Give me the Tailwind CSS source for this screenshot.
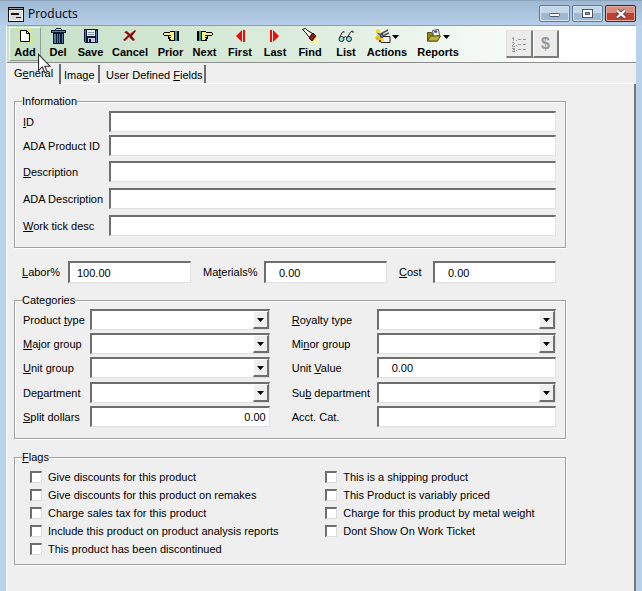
<!DOCTYPE html>
<html lang="en">
<head>
    <meta charset="UTF-8">
    <meta name="viewport" content="width=device-width, initial-scale=1.0">
    <title>Products</title>
    <script src="https://cdn.jsdelivr.net/npm/@tailwindcss/browser@4"></script>
</head>
<body class="min-h-screen flex flex-col bg-[#b9d1ea] font-['Liberation_Sans',Arial,sans-serif] text-[11px] leading-[14px] text-black">
    <!-- Title bar -->
    <header class="h-[25px] shrink-0 flex items-start justify-between pl-2 pr-[6px] bg-linear-to-b from-[#9fb9d4] to-[#b7cfe9] border-t border-[#8fa5bd]">
        <div class="flex items-center gap-1 pt-1">
            <svg class="w-4 h-[15px]" viewBox="0 0 16 15" shape-rendering="crispEdges">
                <path fill="#111" d="M0 0h16v15H0z"/>
                <path fill="#999" d="M1 1h14v1H1z"/>
                <path fill="#fff" d="M1 3h14v11H1z"/>
                <path fill="#dcdcdc" d="M2 4h12v9H2z"/>
                <path fill="#111" d="M3 6h8v2H3zM8 10h5v1H8z"/>
            </svg>
            <h1 class="font-['Open_Sans','Noto_Sans',sans-serif] text-[12px] leading-[18px]">Products</h1>
        </div>
        <div class="flex gap-[2px] pt-1">
            <button aria-label="Minimize" class="w-[31px] h-[17px] flex items-center justify-center rounded-[2px] border border-[#5f7896] bg-linear-to-b from-[#c3d6ea] from-50% to-[#9fb9d5] to-50% shadow-[inset_0_0_0_1px_#d5e3f1]">
                <svg class="w-3 h-3" viewBox="0 0 12 12"><rect x="0.5" y="5.5" width="10" height="3" rx="1" fill="#fff" stroke="#4d5866"/></svg>
            </button>
            <button aria-label="Maximize" class="w-[31px] h-[17px] flex items-center justify-center rounded-[2px] border border-[#5f7896] bg-linear-to-b from-[#c3d6ea] from-50% to-[#9fb9d5] to-50% shadow-[inset_0_0_0_1px_#d5e3f1]">
                <svg class="w-3 h-3" viewBox="0 0 12 12"><rect x="0.5" y="1.5" width="10" height="8" fill="#fff" stroke="#4d5866"/><rect x="3.5" y="4.5" width="4" height="2" fill="#8aa" stroke="#4d5866"/></svg>
            </button>
            <button aria-label="Close" class="w-[31px] h-[17px] flex items-center justify-center rounded-[2px] border border-[#5b1f1c] bg-linear-to-b from-[#d98d7e] from-50% to-[#bd4030] to-50% shadow-[inset_0_0_0_1px_#e3aaa0]">
                <svg class="w-3 h-3" viewBox="0 0 12 12"><path d="M2 2.500l8 7M10 2.500l-8 7" stroke="#4d4550" stroke-width="4"/><path d="M2 2.500l8 7M10 2.500l-8 7" stroke="#fff" stroke-width="2.300"/></svg>
            </button>
        </div>
    </header>

    <div class="relative flex-grow flex flex-col mx-[6px] bg-[#efefef] border-l border-[#f8f8f8]">
        <!-- Toolbar -->
        <div class="h-[38px] shrink-0 flex items-center border-t border-b border-t-[#9a9a9a] border-b-[#8e8e8e] pl-[2px] bg-linear-to-r from-[#c5e0c6] via-[#dcecdc] via-45% to-white to-90% font-bold leading-4">
            <button class="w-8 h-[34px] flex flex-col items-center justify-center border border-r-[#8fa08f] border-b-[#8fa08f] border-t-white border-l-white">
                <svg class="w-4 h-4" viewBox="0 0 16 16">
                    <path d="M1 1l4 4M15 1l-4 4M0 8h4M16 8h-4M1 15l4-4M15 15l-4-4" stroke="#f5f02a" stroke-width="1.500"/>
                    <path d="M3.500 2.500h6l3 3v8h-9z" fill="#fff" stroke="#000"/><path d="M9.500 2.500v3h3" fill="none" stroke="#000"/>
                </svg>
                <span>Add</span>
            </button>
            <button class="w-[34px] flex flex-col items-center">
                <svg class="w-4 h-4" viewBox="0 0 16 16" shape-rendering="crispEdges">
                    <path fill="#0d1b33" d="M6 0h5v1H6zM5 1h1v1H5zM11 1h1v1h-1zM1 2h15v3H1zM3 5h11v11H3z"/>
                    <path fill="#5b7fae" d="M2 3h13v1H2z"/>
                    <path fill="#5379ab" d="M4 6h2v9H4zM7 6h1v9H7zM9 6h1v9H9zM12 6h1v9h-1z"/>
                </svg>
                <span>Del</span>
            </button>
            <button class="w-[31px] flex flex-col items-center">
                <svg class="w-4 h-4" viewBox="0 0 16 16" shape-rendering="crispEdges">
                    <path fill="#0b1433" d="M1 1h13l1 1v13H2l-1-1z"/>
                    <path fill="#5870a8" d="M2 2h1v12H2zM13 3h1v11h-1z"/>
                    <path fill="#e8edf4" d="M4 2h8v6H4z"/>
                    <path fill="#8794ad" d="M5 4h6v1H5zM5 6h6v1H5z"/>
                    <path fill="#c8ccd8" d="M5 10h7v4H5z"/><path fill="#0b1433" d="M6 11h2v3H6z"/>
                </svg>
                <span>Save</span>
            </button>
            <button class="w-12 flex flex-col items-center">
                <svg class="w-4 h-4" viewBox="0 0 16 16">
                    <path fill="#8b0d12" d="M2 4l3-1 3 3 5-4 1 1-4 5 3 4-2 1-4-4-4 4-2-1 5-5z"/>
                </svg>
                <span>Cancel</span>
            </button>
            <button class="w-[33px] flex flex-col items-center">
                <svg class="w-4 h-4" viewBox="0 0 16 16" shape-rendering="crispEdges">
                    <path fill="#000" d="M1 4h6v-1h6v10H6v-2H5V8H1V7H0V5h1z"/>
                    <path fill="#fff27a" d="M1 5h7v2H1zM7 4h4v8H7zM6 8h2v2H6z"/>
                    <path fill="#000" d="M5 7h3v1H5zM6 9h2v1H6zM7 11h1v1H7z"/>
                    <path fill="#18a9a0" d="M12 3h2v10h-2z"/><path fill="#000" d="M14 3h2v10h-2z"/>
                </svg>
                <span>Prior</span>
            </button>
            <button class="w-[35px] flex flex-col items-center">
                <svg class="w-4 h-4" viewBox="0 0 16 16" shape-rendering="crispEdges">
                    <g transform="matrix(-1 0 0 1 16 0)">
                        <path fill="#000" d="M1 4h6v-1h6v10H6v-2H5V8H1V7H0V5h1z"/>
                        <path fill="#fff27a" d="M1 5h7v2H1zM7 4h4v8H7zM6 8h2v2H6z"/>
                        <path fill="#000" d="M5 7h3v1H5zM6 9h2v1H6zM7 11h1v1H7z"/>
                        <path fill="#18a9a0" d="M12 3h2v10h-2z"/><path fill="#000" d="M14 3h2v10h-2z"/>
                    </g>
                </svg>
                <span>Next</span>
            </button>
            <button class="w-9 flex flex-col items-center">
                <svg class="w-4 h-4" viewBox="0 0 16 16"><path fill="#f00b0b" d="M4 8l6-6v12zM11 2h2v12h-2z"/></svg>
                <span>First</span>
            </button>
            <button class="w-[34px] flex flex-col items-center">
                <svg class="w-4 h-4" viewBox="0 0 16 16"><path fill="#f00b0b" d="M12 8L6 2v12zM3 2h2v12H3z"/></svg>
                <span>Last</span>
            </button>
            <button class="w-9 flex flex-col items-center">
                <svg class="w-4 h-4" viewBox="0 0 16 16">
                    <path fill="#fdf5a0" d="M15 8l1 8H7l3-4z"/>
                    <path d="M.5 1.500l3-1 2 2 5 3-3 4-4-5z" fill="#fff" stroke="#000"/>
                    <path d="M11 5l3 3-4 5-3-3z" fill="#a31515" stroke="#300"/>
                </svg>
                <span>Find</span>
            </button>
            <button class="w-9 flex flex-col items-center">
                <svg class="w-4 h-4" viewBox="0 0 16 16">
                    <path d="M1.500 10L4 4.500 6 3.500v1M9.500 9L13 3.500l2-.5v2M6 9.500q1.500-2 3 0" fill="none" stroke="#222"/>
                    <circle cx="3.500" cy="11" r="2.500" fill="#8fe3e3" stroke="#222"/><circle cx="11" cy="11" r="2.500" fill="#8fe3e3" stroke="#222"/>
                </svg>
                <span>List</span>
            </button>
            <button class="w-[46px] flex flex-col items-center">
                <svg class="w-6 h-4" viewBox="0 0 24 16">
                    <path d="M6 8.500h9v6H6z" fill="#f2f2f2" stroke="#222"/>
                    <path d="M4 7l9-5M5 9l9-4M2 4l6 6" stroke="#555" stroke-width="1.500"/>
                    <circle cx="3" cy="3" r="2" fill="#f3dc1d"/><circle cx="3" cy="10" r="2.500" fill="#e0bd16"/><circle cx="7" cy="12" r="2" fill="#f3dc1d"/>
                    <path fill="#b32020" d="M4 12h2v2H4z"/><path fill="#3641a0" d="M6 5h2v2H6z"/>
                    <path fill="#000" d="M17 7h7l-3.500 4z"/>
                </svg>
                <span>Actions</span>
            </button>
            <button class="w-14 flex flex-col items-center">
                <svg class="w-6 h-4" viewBox="0 0 24 16">
                    <path d="M1.500 4.500h4l1 1.500h5v7h-10z" fill="#8f8b1c" stroke="#54520f"/>
                    <path d="M6.500 2.500l6-1 1 6-6 1z" fill="#fff" stroke="#555"/><path fill="#3646b5" d="M8 3l3-.5.5 2-3 .5z"/>
                    <path d="M1.500 13l3-5h10l-3 5z" fill="#b9b53c" stroke="#54520f"/>
                    <path fill="#000" d="M17 7h7l-3.500 4z"/>
                </svg>
                <span>Reports</span>
            </button>
            <button disabled aria-label="Numbered list" class="ml-10 w-[27px] h-7 flex items-center justify-center bg-[#ececec] border border-l-[#e0e0e0] border-t-[#e0e0e0] border-r-2 border-b-2 border-r-[#7b7b7b] border-b-[#7b7b7b]">
                <svg class="w-4 h-4" viewBox="0 0 16 16" shape-rendering="crispEdges">
                    <path fill="#9b9b9b" d="M2 1h1v4H2zM1 2h1v1H1zM1 6h2v1h1v1H3v1H2v1h2v1H1V9h1V8h1V7H1zM1 12h3v4H1v-1h2v-1H2v-1h1H1zM5 4h1v1H5zM5 9h1v1H5zM5 14h1v1H5zM7 3h3v1H7zM12 3h3v1h-3zM7 8h3v1H7zM12 8h3v1h-3zM7 13h3v1H7zM12 13h3v1h-3z"/>
                </svg>
            </button>
            <button disabled class="w-[26px] h-7 flex items-center justify-center bg-[#ececec] border border-l-white border-t-[#e0e0e0] border-r-2 border-b-2 border-r-[#7b7b7b] border-b-[#7b7b7b] text-[16px] text-[#9a9a9a]">$</button>
        </div>

        <!-- Tabs -->
        <nav class="h-[21px] shrink-0 flex items-end">
            <a href="#general" class="h-5 w-[54px] pl-[7px] pt-[2px] border-r-2 border-[#6e6e6e]">G<u>e</u>neral</a>
            <div class="flex-grow flex items-end border-b border-white">
                <a href="#image" class="h-[18px] w-[39px] pl-[3px] pt-[3px] border-r-2 border-[#6e6e6e]">Ima<u>g</u>e</a>
                <a href="#fields" class="h-[18px] w-[106px] pl-[6px] pt-[3px] border-r-2 border-[#6e6e6e]">User Defined <u>F</u>ields</a>
            </div>
        </nav>

        <main id="general" class="flex-grow border-r-2 border-[#777] pl-[7px] pr-[68px] pt-[10px]">
            <fieldset class="border border-[#a0a0a0] shadow-[1px_1px_0_#fff,inset_1px_1px_0_#fff] pl-2 pr-[9px] pt-[3px] pb-[11px]">
                <legend class="-ml-[1px] bg-[#efefef]">Information</legend>
                <div class="flex items-center">
                    <label for="pid" class="w-[86px]"><u>I</u>D</label>
                    <input id="pid" type="text" class="flex-grow h-[21px] px-2 bg-white border border-t-2 border-l-2 border-t-[#6e6e6e] border-l-[#6e6e6e] border-r-[#e0e0e0] border-b-[#e0e0e0] outline-none">
                </div>
                <div class="flex items-center mt-[3px]">
                    <label for="ada" class="w-[86px]">ADA Product ID</label>
                    <input id="ada" type="text" class="flex-grow h-[21px] px-2 bg-white border border-t-2 border-l-2 border-t-[#6e6e6e] border-l-[#6e6e6e] border-r-[#e0e0e0] border-b-[#e0e0e0] outline-none">
                </div>
                <div class="flex items-center mt-[5px]">
                    <label for="desc" class="w-[86px]"><u>D</u>escription</label>
                    <input id="desc" type="text" class="flex-grow h-[21px] px-2 bg-white border border-t-2 border-l-2 border-t-[#6e6e6e] border-l-[#6e6e6e] border-r-[#e0e0e0] border-b-[#e0e0e0] outline-none">
                </div>
                <div class="flex items-center mt-[6px]">
                    <label for="adadesc" class="w-[86px]">ADA Description</label>
                    <input id="adadesc" type="text" class="flex-grow h-[21px] px-2 bg-white border border-t-2 border-l-2 border-t-[#6e6e6e] border-l-[#6e6e6e] border-r-[#e0e0e0] border-b-[#e0e0e0] outline-none">
                </div>
                <div class="flex items-center mt-[6px]">
                    <label for="tick" class="w-[86px]"><u>W</u>ork tick desc</label>
                    <input id="tick" type="text" class="flex-grow h-[21px] px-2 bg-white border border-t-2 border-l-2 border-t-[#6e6e6e] border-l-[#6e6e6e] border-r-[#e0e0e0] border-b-[#e0e0e0] outline-none">
                </div>
            </fieldset>

            <div class="flex items-center mt-[13px] pl-2 pr-[10px]">
                <label for="labor" class="w-[46px]"><u>L</u>abor%</label>
                <input id="labor" type="text" value="100.00" class="grow basis-20 min-w-0 h-[22px] pl-[7px] bg-white border border-t-2 border-l-2 border-t-[#6e6e6e] border-l-[#6e6e6e] border-r-[#e0e0e0] border-b-[#e0e0e0] outline-none">
                <label for="materials" class="w-[61px] ml-3">Ma<u>t</u>erials%</label>
                <input id="materials" type="text" value="0.00" class="grow basis-20 min-w-0 h-[22px] pl-[13px] bg-white border border-t-2 border-l-2 border-t-[#6e6e6e] border-l-[#6e6e6e] border-r-[#e0e0e0] border-b-[#e0e0e0] outline-none">
                <label for="cost" class="w-[34px] ml-3"><u>C</u>ost</label>
                <input id="cost" type="text" value="0.00" class="grow basis-20 min-w-0 h-[22px] pl-[13px] bg-white border border-t-2 border-l-2 border-t-[#6e6e6e] border-l-[#6e6e6e] border-r-[#e0e0e0] border-b-[#e0e0e0] outline-none">
            </div>

            <fieldset class="mt-[10px] border border-[#a0a0a0] shadow-[1px_1px_0_#fff,inset_1px_1px_0_#fff] pl-2 pr-[9px] pt-[2px] pb-[11px]">
                <legend class="-ml-[1px] bg-[#efefef]">Categories</legend>
                <div class="grid grid-cols-[14fr_15fr] gap-x-[22px]">
                    <div class="flex flex-col gap-[3px]">
                        <div class="flex items-center">
                            <label for="ptype" class="w-[67px]">Product <u>t</u>ype</label>
                            <div class="relative flex-grow">
                                <select id="ptype" class="appearance-none block w-full h-[21px] bg-white border border-t-2 border-l-2 border-t-[#6e6e6e] border-l-[#6e6e6e] border-r-[#e0e0e0] border-b-[#e0e0e0] outline-none"><option></option></select>
                                <span class="absolute right-[1px] top-[2px] w-4 h-[18px] flex items-center justify-center pointer-events-none bg-[#efefef] border border-white border-r-2 border-b-2 border-r-[#6e6e6e] border-b-[#6e6e6e]"><svg class="w-[7px] h-1" viewBox="0 0 7 4"><path d="M0 0h7L3.500 4z"/></svg></span>
                            </div>
                        </div>
                        <div class="flex items-center">
                            <label for="major" class="w-[67px]"><u>M</u>ajor group</label>
                            <div class="relative flex-grow">
                                <select id="major" class="appearance-none block w-full h-[21px] bg-white border border-t-2 border-l-2 border-t-[#6e6e6e] border-l-[#6e6e6e] border-r-[#e0e0e0] border-b-[#e0e0e0] outline-none"><option></option></select>
                                <span class="absolute right-[1px] top-[2px] w-4 h-[18px] flex items-center justify-center pointer-events-none bg-[#efefef] border border-white border-r-2 border-b-2 border-r-[#6e6e6e] border-b-[#6e6e6e]"><svg class="w-[7px] h-1" viewBox="0 0 7 4"><path d="M0 0h7L3.500 4z"/></svg></span>
                            </div>
                        </div>
                        <div class="flex items-center">
                            <label for="ugroup" class="w-[67px]"><u>U</u>nit group</label>
                            <div class="relative flex-grow">
                                <select id="ugroup" class="appearance-none block w-full h-[21px] bg-white border border-t-2 border-l-2 border-t-[#6e6e6e] border-l-[#6e6e6e] border-r-[#e0e0e0] border-b-[#e0e0e0] outline-none"><option></option></select>
                                <span class="absolute right-[1px] top-[2px] w-4 h-[18px] flex items-center justify-center pointer-events-none bg-[#efefef] border border-white border-r-2 border-b-2 border-r-[#6e6e6e] border-b-[#6e6e6e]"><svg class="w-[7px] h-1" viewBox="0 0 7 4"><path d="M0 0h7L3.500 4z"/></svg></span>
                            </div>
                        </div>
                        <div class="flex items-center mt-[1px]">
                            <label for="dept" class="w-[67px]">De<u>p</u>artment</label>
                            <div class="relative flex-grow">
                                <select id="dept" class="appearance-none block w-full h-[21px] bg-white border border-t-2 border-l-2 border-t-[#6e6e6e] border-l-[#6e6e6e] border-r-[#e0e0e0] border-b-[#e0e0e0] outline-none"><option></option></select>
                                <span class="absolute right-[1px] top-[2px] w-4 h-[18px] flex items-center justify-center pointer-events-none bg-[#efefef] border border-white border-r-2 border-b-2 border-r-[#6e6e6e] border-b-[#6e6e6e]"><svg class="w-[7px] h-1" viewBox="0 0 7 4"><path d="M0 0h7L3.500 4z"/></svg></span>
                            </div>
                        </div>
                        <div class="flex items-center">
                            <label for="split" class="w-[67px]"><u>S</u>plit dollars</label>
                            <input id="split" type="text" value="0.00" class="flex-1 min-w-0 h-[21px] pr-[3px] text-right bg-white border border-t-2 border-l-2 border-t-[#6e6e6e] border-l-[#6e6e6e] border-r-[#e0e0e0] border-b-[#e0e0e0] outline-none">
                        </div>
                    </div>
                    <div class="flex flex-col gap-[3px]">
                        <div class="flex items-center">
                            <label for="royalty" class="w-[85px]"><u>R</u>oyalty type</label>
                            <div class="relative flex-grow">
                                <select id="royalty" class="appearance-none block w-full h-[21px] bg-white border border-t-2 border-l-2 border-t-[#6e6e6e] border-l-[#6e6e6e] border-r-[#e0e0e0] border-b-[#e0e0e0] outline-none"><option></option></select>
                                <span class="absolute right-[1px] top-[2px] w-4 h-[18px] flex items-center justify-center pointer-events-none bg-[#efefef] border border-white border-r-2 border-b-2 border-r-[#6e6e6e] border-b-[#6e6e6e]"><svg class="w-[7px] h-1" viewBox="0 0 7 4"><path d="M0 0h7L3.500 4z"/></svg></span>
                            </div>
                        </div>
                        <div class="flex items-center">
                            <label for="minor" class="w-[85px]">Mi<u>n</u>or group</label>
                            <div class="relative flex-grow">
                                <select id="minor" class="appearance-none block w-full h-[21px] bg-white border border-t-2 border-l-2 border-t-[#6e6e6e] border-l-[#6e6e6e] border-r-[#e0e0e0] border-b-[#e0e0e0] outline-none"><option></option></select>
                                <span class="absolute right-[1px] top-[2px] w-4 h-[18px] flex items-center justify-center pointer-events-none bg-[#efefef] border border-white border-r-2 border-b-2 border-r-[#6e6e6e] border-b-[#6e6e6e]"><svg class="w-[7px] h-1" viewBox="0 0 7 4"><path d="M0 0h7L3.500 4z"/></svg></span>
                            </div>
                        </div>
                        <div class="flex items-center">
                            <label for="uvalue" class="w-[85px]">Unit <u>V</u>alue</label>
                            <input id="uvalue" type="text" value="0.00" class="flex-1 min-w-0 h-[21px] pl-[13px] bg-white border border-t-2 border-l-2 border-t-[#6e6e6e] border-l-[#6e6e6e] border-r-[#e0e0e0] border-b-[#e0e0e0] outline-none">
                        </div>
                        <div class="flex items-center mt-[1px]">
                            <label for="subdept" class="w-[85px]">Su<u>b</u> department</label>
                            <div class="relative flex-grow">
                                <select id="subdept" class="appearance-none block w-full h-[21px] bg-white border border-t-2 border-l-2 border-t-[#6e6e6e] border-l-[#6e6e6e] border-r-[#e0e0e0] border-b-[#e0e0e0] outline-none"><option></option></select>
                                <span class="absolute right-[1px] top-[2px] w-4 h-[18px] flex items-center justify-center pointer-events-none bg-[#efefef] border border-white border-r-2 border-b-2 border-r-[#6e6e6e] border-b-[#6e6e6e]"><svg class="w-[7px] h-1" viewBox="0 0 7 4"><path d="M0 0h7L3.500 4z"/></svg></span>
                            </div>
                        </div>
                        <div class="flex items-center">
                            <label for="acct" class="w-[85px]">Acct. Cat.</label>
                            <input id="acct" type="text" class="flex-1 min-w-0 h-[21px] px-2 bg-white border border-t-2 border-l-2 border-t-[#6e6e6e] border-l-[#6e6e6e] border-r-[#e0e0e0] border-b-[#e0e0e0] outline-none">
                        </div>
                    </div>
                </div>
            </fieldset>

            <fieldset class="mt-[11px] border border-[#a0a0a0] shadow-[1px_1px_0_#fff,inset_1px_1px_0_#fff] pl-[15px] pt-1 pb-[6px]">
                <legend class="-ml-2 bg-[#efefef]"><u>F</u>lags</legend>
                <div class="flex">
                    <div class="w-[55%]">
                        <label class="flex items-center gap-[6px] h-[18px]"><input type="checkbox" class="appearance-none size-3 bg-white border border-t-2 border-l-2 border-t-[#6e6e6e] border-l-[#6e6e6e] border-[#dcdcdc]">Give discounts for this product</label>
                        <label class="flex items-center gap-[6px] h-[18px]"><input type="checkbox" class="appearance-none size-3 bg-white border border-t-2 border-l-2 border-t-[#6e6e6e] border-l-[#6e6e6e] border-[#dcdcdc]">Give discounts for this product on remakes</label>
                        <label class="flex items-center gap-[6px] h-[18px]"><input type="checkbox" class="appearance-none size-3 bg-white border border-t-2 border-l-2 border-t-[#6e6e6e] border-l-[#6e6e6e] border-[#dcdcdc]">Charge sales tax for this product</label>
                        <label class="flex items-center gap-[6px] h-[18px]"><input type="checkbox" class="appearance-none size-3 bg-white border border-t-2 border-l-2 border-t-[#6e6e6e] border-l-[#6e6e6e] border-[#dcdcdc]">Include this product on product analysis reports</label>
                        <label class="flex items-center gap-[6px] h-[18px]"><input type="checkbox" class="appearance-none size-3 bg-white border border-t-2 border-l-2 border-t-[#6e6e6e] border-l-[#6e6e6e] border-[#dcdcdc]">This product has been discontinued</label>
                    </div>
                    <div class="pl-[1px]">
                        <label class="flex items-center gap-[6px] h-[18px]"><input type="checkbox" class="appearance-none size-3 bg-white border border-t-2 border-l-2 border-t-[#6e6e6e] border-l-[#6e6e6e] border-[#dcdcdc]">This is a shipping product</label>
                        <label class="flex items-center gap-[6px] h-[18px]"><input type="checkbox" class="appearance-none size-3 bg-white border border-t-2 border-l-2 border-t-[#6e6e6e] border-l-[#6e6e6e] border-[#dcdcdc]">This Product is variably priced</label>
                        <label class="flex items-center gap-[6px] h-[18px]"><input type="checkbox" class="appearance-none size-3 bg-white border border-t-2 border-l-2 border-t-[#6e6e6e] border-l-[#6e6e6e] border-[#dcdcdc]">Charge for this product by metal weight</label>
                        <label class="flex items-center gap-[6px] h-[18px]"><input type="checkbox" class="appearance-none size-3 bg-white border border-t-2 border-l-2 border-t-[#6e6e6e] border-l-[#6e6e6e] border-[#dcdcdc]">Dont Show On Work Ticket</label>
                    </div>
                </div>
            </fieldset>
        </main>

        <!-- Mouse pointer -->
        <svg class="absolute left-[31px] top-7 w-[13px] h-[21px] pointer-events-none" viewBox="0 0 12 19"><path d="M.5 1v15l3.500-3.300 2.300 5.300 2.200-1-2.300-5H11z" fill="#fff" stroke="#333"/></svg>
    </div>
</body>
</html>
